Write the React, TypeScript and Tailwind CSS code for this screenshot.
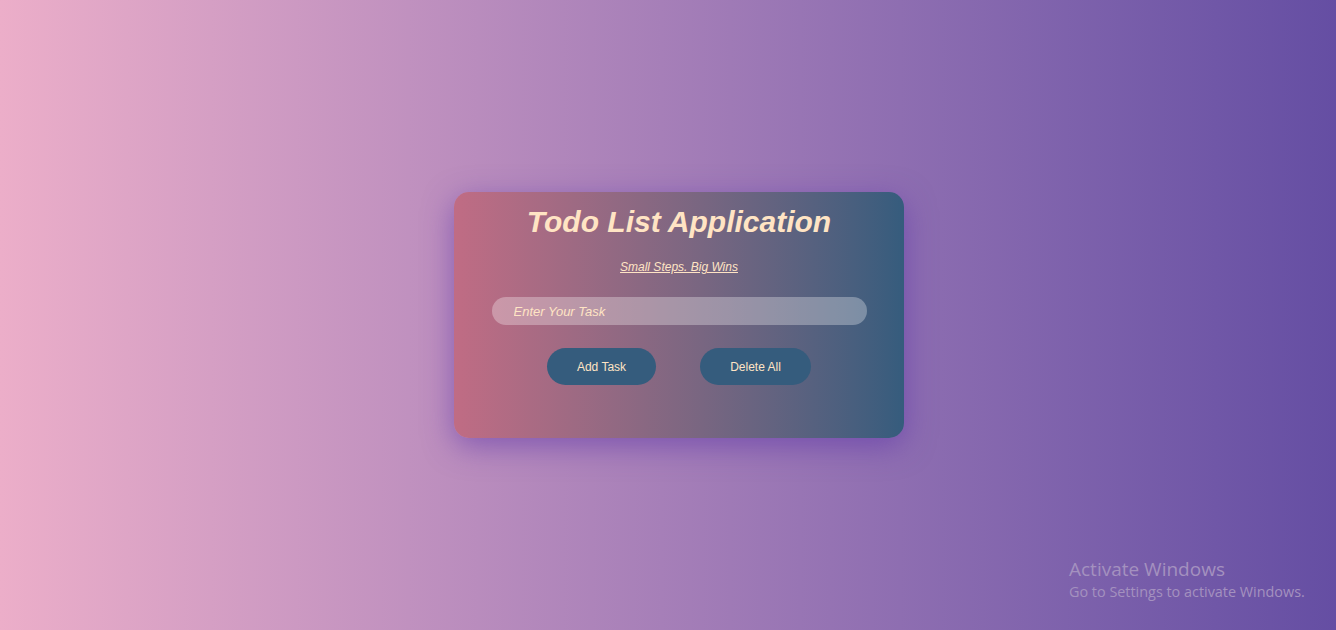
import React from "react";

export default function App() {
  return (
    <div
      className="relative w-full h-[630px] overflow-hidden flex items-center justify-center pl-[22px] bg-gradient-to-r from-[#ecaec9] to-[#654ea3]"
      style={{ fontFamily: '"Liberation Sans", Arial, sans-serif' }}
    >
      <div className="w-[450px] h-[246px] rounded-[15px] bg-gradient-to-r from-[#c06c84] to-[#355c7d] shadow-[0_8px_30px_rgba(90,50,170,0.55)] flex flex-col items-center pt-[11px]">
        <h1 className="text-[30px] leading-[37px] font-bold italic text-[#ffe4c4]">
          Todo List Application
        </h1>
        <p className="mt-[20px] text-[12px] leading-[15px] italic underline text-[#ffe4c4]">
          Small Steps. Big Wins
        </p>
        <input
          className="mt-[22px] w-[375px] h-[28px] rounded-full bg-white/30 px-[22px] text-[13px] italic text-[#ffe4c4] placeholder:text-[#ffe4c4] outline-none border-0"
          placeholder="Enter Your Task"
        />
        <div className="mt-[23px] flex gap-[44px]">
          <button className="w-[109px] h-[37px] rounded-full bg-[#355c7d] text-[12px] text-[#ffe4c4]">
            Add Task
          </button>
          <button className="w-[111px] h-[37px] rounded-full bg-[#355c7d] text-[12px] text-[#ffe4c4]">
            Delete All
          </button>
        </div>
      </div>
      <div
        className="absolute left-[1069px] top-[557px] text-[#a491bf]"
        style={{ fontFamily: '"Open Sans", "Noto Sans", sans-serif' }}
      >
        <div className="text-[19px] leading-[24px]">Activate Windows</div>
        <div className="text-[14.4px] leading-[20px] mt-[1px]">Go to Settings to activate Windows.</div>
      </div>
    </div>
  );
}
